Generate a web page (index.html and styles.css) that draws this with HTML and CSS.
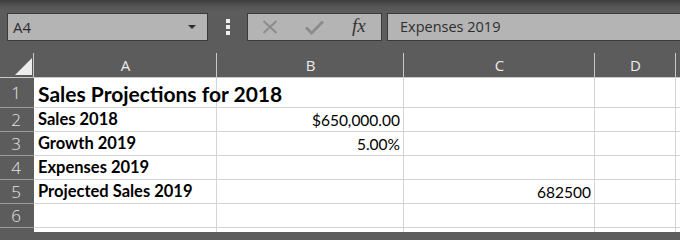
FILE: index.html
```html
<!DOCTYPE html>
<html>
<head>
<meta charset="utf-8">
<link rel="stylesheet" href="styles.css">
</head>
<body>
<div class="app">
  <div class="toolbar">
    <div class="namebox"><span class="name">A4</span><span class="caret"></span></div>
    <div class="dots"><i></i><i></i><i></i></div>
    <div class="buttons">
      <svg class="ico-x" width="16" height="14" viewBox="0 0 16 14"><path d="M1.5 1 L14.5 13 M14.5 1 L1.5 13" stroke="#8c8c8c" stroke-width="2" fill="none"/></svg>
      <svg class="ico-check" width="19" height="15" viewBox="0 0 19 15"><path d="M1 7.5 L6.5 13 L18 1.5" stroke="#8c8c8c" stroke-width="3" fill="none"/></svg>
      <span class="fx">fx</span>
    </div>
    <div class="formula">Expenses 2019</div>
  </div>
  <div class="sheet">
    <div class="corner"><span class="tri"></span></div>
    <div class="colhead">A</div>
    <div class="colhead">B</div>
    <div class="colhead">C</div>
    <div class="colhead">D</div>
    <div class="colhead last"></div>

    <div class="rowhead">1</div>
    <div class="cell title">Sales Projections for 2018</div>
    <div class="cell"></div>
    <div class="cell"></div>
    <div class="cell"></div>
    <div class="cell"></div>

    <div class="rowhead">2</div>
    <div class="cell label">Sales 2018</div>
    <div class="cell num">$650,000.00</div>
    <div class="cell"></div>
    <div class="cell"></div>
    <div class="cell"></div>

    <div class="rowhead">3</div>
    <div class="cell label">Growth 2019</div>
    <div class="cell num">5.00%</div>
    <div class="cell"></div>
    <div class="cell"></div>
    <div class="cell"></div>

    <div class="rowhead">4</div>
    <div class="cell label">Expenses 2019</div>
    <div class="cell"></div>
    <div class="cell"></div>
    <div class="cell"></div>
    <div class="cell"></div>

    <div class="rowhead">5</div>
    <div class="cell label">Projected Sales 2019</div>
    <div class="cell"></div>
    <div class="cell num">682500</div>
    <div class="cell"></div>
    <div class="cell"></div>

    <div class="rowhead">6</div>
    <div class="cell"></div>
    <div class="cell"></div>
    <div class="cell"></div>
    <div class="cell"></div>
    <div class="cell"></div>

    <div class="rowhead"></div>
    <div class="cell"></div>
    <div class="cell"></div>
    <div class="cell"></div>
    <div class="cell"></div>
    <div class="cell"></div>
  </div>
</div>
</body>
</html>
```
FILE: styles.css
```css
* { box-sizing: border-box; }
html, body { margin: 0; padding: 0; }
body {
  width: 680px;
  height: 232px;
  overflow: hidden;
  background: #5c5c5c;
  font-family: "Open Sans", "Liberation Sans", sans-serif;
}
.app { width: 680px; height: 232px; overflow: hidden; }

.toolbar {
  height: 48px;
  display: flex;
  align-items: flex-start;
  padding: 13px 0 0 7px;
  background: linear-gradient(#3c3c3c 0px, #555555 6px, #5c5c5c 12px, #5c5c5c 100%);
}
.namebox {
  width: 201px;
  height: 28px;
  background: #b4b4b4;
  border: 1px solid #3a3a3a;
  display: flex;
  align-items: center;
  justify-content: space-between;
  padding: 0 11px 0 5px;
}
.name { font-size: 15px; color: #2e2e2e; }
.caret {
  width: 0; height: 0;
  border-left: 4px solid transparent;
  border-right: 4px solid transparent;
  border-top: 4px solid #2e2e2e;
}
.dots {
  width: 39px;
  height: 28px;
  display: flex;
  flex-direction: column;
  align-items: center;
  justify-content: center;
  gap: 2px;
}
.dots i { display: block; width: 4px; height: 4px; background: #efefef; }
.buttons {
  width: 135px;
  height: 28px;
  background: #b4b4b4;
  border: 1px solid #3a3a3a;
  display: flex;
  align-items: center;
  padding-left: 14px;
}
.ico-x { margin-right: 27px; }
.ico-check { margin-right: 28px; }
.fx {
  font-family: "Liberation Serif", "DejaVu Serif", serif;
  font-style: italic;
  font-size: 19px;
  color: #333;
  margin-top: -2px;
}
.formula {
  margin-left: 5px;
  flex: 1;
  height: 28px;
  background: #b4b4b4;
  border: 1px solid #3a3a3a;
  border-right: none;
  padding-left: 12px;
  font-size: 14.5px;
  line-height: 26px;
  color: #2e2e2e;
}

.sheet {
  display: grid;
  grid-template-columns: 34px 183px 187px 191px 81px 1fr;
  grid-template-rows: 30px 30px repeat(6, 24px);
}
.corner {
  position: relative;
  background: #5c5c5c;
  border-bottom: 1px solid #c8c8c8;
}
.tri {
  position: absolute;
  left: 15px;
  top: 10px;
  width: 0; height: 0;
  border-left: 17px solid transparent;
  border-bottom: 17px solid #ececec;
}
.colhead {
  background: #5c5c5c;
  border-bottom: 1px solid #c8c8c8;
  color: #ececec;
  font-size: 15px;
  display: flex;
  align-items: flex-end;
  justify-content: center;
  padding-bottom: 2px;
  position: relative;
}
.colhead::before {
  content: "";
  position: absolute;
  left: -1px;
  top: 5px;
  bottom: 0;
  width: 1px;
  background: #c8c8c8;
}
.rowhead {
  background: #5c5c5c;
  border-bottom: 1px solid #9a9a9a;
  color: #e4e4e4;
  font-size: 17px;
  font-weight: 300;
  display: flex;
  align-items: center;
  justify-content: center;
  padding-right: 2px;
}
.cell {
  background: #ffffff;
  border-right: 1px solid #d4d4d4;
  border-bottom: 1px solid #d4d4d4;
  font-family: "Lato", "Open Sans", sans-serif;
  color: #000;
  font-size: 15.5px;
  display: flex;
  align-items: flex-end;
  padding: 0 3px 2px 4px;
  white-space: nowrap;
}
.title {
  font-weight: 700;
  font-size: 21px;
  padding-bottom: 1px;
  position: relative;
  z-index: 1;
}
.label { font-weight: 700; font-size: 16.5px; }
.num { justify-content: flex-end; }
```
